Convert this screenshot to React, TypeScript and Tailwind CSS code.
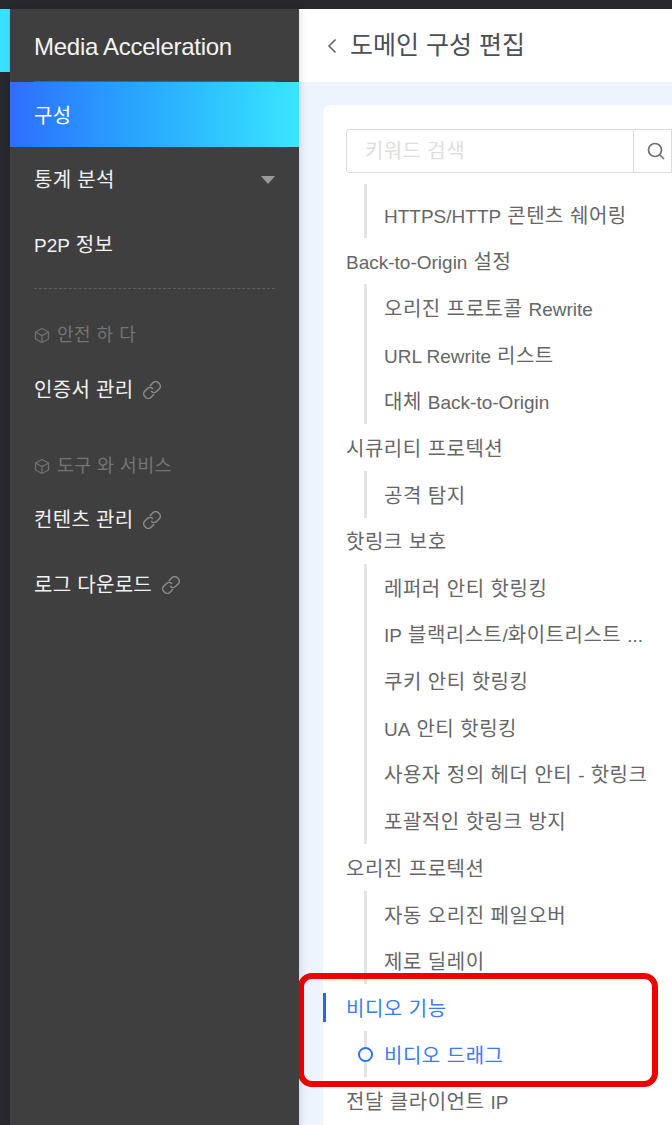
import React from 'react'

const fontStack = '[font-family:"Liberation_Sans","Noto_Sans_CJK_KR",sans-serif]'

type TreeGroup = {
  title?: string
  active?: boolean
  items: {label: string; active?: boolean}[]
}

const groups: TreeGroup[] = [
  {items: [{label: 'HTTPS/HTTP 콘텐츠 쉐어링'}]},
  {
    title: 'Back-to-Origin 설정',
    items: [{label: '오리진 프로토콜 Rewrite'}, {label: 'URL Rewrite 리스트'}, {label: '대체 Back-to-Origin'}],
  },
  {title: '시큐리티 프로텍션', items: [{label: '공격 탐지'}]},
  {
    title: '핫링크 보호',
    items: [
      {label: '레퍼러 안티 핫링킹'},
      {label: 'IP 블랙리스트/화이트리스트 ...'},
      {label: '쿠키 안티 핫링킹'},
      {label: 'UA 안티 핫링킹'},
      {label: '사용자 정의 헤더 안티 - 핫링크'},
      {label: '포괄적인 핫링크 방지'},
    ],
  },
  {title: '오리진 프로텍션', items: [{label: '자동 오리진 페일오버'}, {label: '제로 딜레이'}]},
  {title: '비디오 기능', active: true, items: [{label: '비디오 드래그', active: true}]},
]

// latin runs sit a bit smaller than the hangul in the original
function Mixed({text}: {text: string}) {
  return (
    <>
      {text.split(/([A-Za-z0-9/.\-]+(?: [A-Za-z0-9/.\-]+)*)/).map((part, i) =>
        i % 2 ? (
          <span key={i} className="text-[19px] tracking-normal">
            {part}
          </span>
        ) : (
          part
        ),
      )}
    </>
  )
}

function BoxIcon() {
  return (
    <svg width="16" height="17" viewBox="0 0 16 17" fill="none" stroke="#6f6f6f" strokeWidth="1.4">
      <path d="M8 1.5 14.5 5v7L8 15.5 1.5 12V5L8 1.5Z" strokeLinejoin="round" />
      <path d="M1.5 5 8 8.6 14.5 5M8 8.6v6.9" strokeLinejoin="round" />
    </svg>
  )
}

function LinkIcon() {
  return (
    <svg width="18" height="18" viewBox="1.5 1.5 15 15" fill="none" stroke="#8a8a8a" strokeWidth="1.3" strokeLinecap="round">
      <path d="M7.6 5.2 10 2.8a2.9 2.9 0 0 1 4.1 0l1 1a2.9 2.9 0 0 1 0 4.1l-2.4 2.4a2.9 2.9 0 0 1-4.1 0" />
      <path d="M10.4 12.8 8 15.2a2.9 2.9 0 0 1-4.1 0l-1-1a2.9 2.9 0 0 1 0-4.1l2.4-2.4a2.9 2.9 0 0 1 4.1 0" />
    </svg>
  )
}

function Sidebar() {
  return (
    <aside className="relative z-10 flex w-[289px] shrink-0 flex-col bg-[#3f3f3f] text-[#f2f2f2] tracking-[0.3px] shadow-[2px_0_6px_rgba(0,0,0,0.12)]">
      <div className="mx-[24px] flex h-[73px] items-center border-b border-[#5d5d5d] pt-[3px] text-[24px] tracking-[-0.27px] text-[#f5f5f5]">
        Media Acceleration
      </div>
      <div className="flex h-[65px] items-center bg-gradient-to-r from-[#2f6dff] to-[#3ae6ff] pl-[24px] pt-[2px] text-[20px] text-white">
        구성
      </div>
      <div className="flex h-[65px] items-center justify-between pl-[24px] pr-[24px] text-[20px]">
        <span>통계 분석</span>
        <span className="h-0 w-0 border-x-[7px] border-t-[8px] border-x-transparent border-t-[#9a9a9a]" />
      </div>
      <div className="flex h-[65px] items-center pl-[24px] pt-[2px] text-[20px]">
        <span>
          <Mixed text="P2P 정보" />
        </span>
      </div>
      <div className="mx-[24px] mt-[11px] border-t border-dashed border-[#5f5f5f]" />
      <div className="mt-[34px] flex items-center gap-[7px] pl-[24px] text-[18px] leading-[24px] text-[#747474]">
        <BoxIcon />
        <span className="tracking-[0.5px]">안전 하 다</span>
      </div>
      <div className="mt-[31px] flex items-center gap-[10px] pl-[24px] text-[20px] leading-[24px]">
        <span>인증서 관리</span>
        <LinkIcon />
      </div>
      <div className="mt-[52px] flex items-center gap-[7px] pl-[24px] text-[18.5px] leading-[24px] text-[#747474]">
        <BoxIcon />
        <span>도구 와 서비스</span>
      </div>
      <div className="mt-[30px] flex items-center gap-[10px] pl-[24px] text-[20px] leading-[24px]">
        <span>컨텐츠 관리</span>
        <LinkIcon />
      </div>
      <div className="mt-[41px] flex items-center gap-[10px] pl-[24px] text-[20px] leading-[24px]">
        <span>로그 다운로드</span>
        <LinkIcon />
      </div>
    </aside>
  )
}

function Tree() {
  return (
    <div className="mt-[11px] tracking-[0.5px]">
      {groups.map((group, i) => (
        <div key={i}>
          {group.title && (
            <div
              className={`relative flex h-[46.67px] items-center pl-[23px] pt-[3px] text-[20px] whitespace-nowrap ${
                group.active ? 'text-[#3b7bf6]' : 'text-[#666666]'
              }`}
            >
              {group.active && <span className="absolute left-0 top-[9px] h-[29px] w-[3px] bg-[#2468f2]" />}
              <span>
                <Mixed text={group.title} />
              </span>
            </div>
          )}
          <div className={`ml-[41px] border-l-[3px] border-[#e3e3e3] ${i === 0 ? 'pt-[7px]' : ''}`}>
            {group.items.map(item => (
              <div
                key={item.label}
                className={`relative flex h-[46.67px] items-center pl-[17px] pt-[3px] text-[20px] whitespace-nowrap ${
                  item.active ? 'text-[#3b7bf6]' : 'text-[#666666]'
                }`}
              >
                {item.active && (
                  <span className="absolute left-[-9px] top-[16px] h-[15px] w-[15px] rounded-full border-[2px] border-[#2f72f0] bg-white" />
                )}
                <span>
                  <Mixed text={item.label} />
                </span>
              </div>
            ))}
          </div>
        </div>
      ))}
      <div className="flex h-[46.67px] items-center pl-[23px] pt-[3px] text-[20px] whitespace-nowrap text-[#666666]">
        <span>
          <Mixed text="전달 클라이언트 IP" />
        </span>
      </div>
    </div>
  )
}

export default function App() {
  return (
    <div className={`relative h-[1125px] w-[672px] overflow-hidden bg-[#26282d] ${fontStack}`}>
      <div className="h-[9px] bg-[#26282d]" />
      <div className="flex h-[1116px]">
        <div className="w-[10px] shrink-0">
          <div className="h-[63px] bg-[#38e0ff]" />
        </div>
        <Sidebar />
        <main className="min-w-0 flex-1 bg-[#edf4fd]">
          <header className="flex h-[73px] items-center gap-[13px] bg-white pl-[28px] text-[#4a4f58]">
            <svg width="10" height="16" viewBox="0 0 10 16" fill="none" stroke="#5f6670" strokeWidth="1.6">
              <path d="M8.5 1.5 2 8l6.5 6.5" />
            </svg>
            <span className="text-[25px]">도메인 구성 편집</span>
          </header>
          <section className="ml-[24px] mt-[23px] h-[1100px] rounded-tl-[8px] bg-white pt-[24px]">
            <div className="ml-[23px] flex h-[44px] rounded-l-[3px] border border-[#dcdcdc]">
              <div className="flex w-[286px] items-center pl-[18px] text-[20px] tracking-[0.4px] text-[#dedede]">키워드 검색</div>
              <div className="flex flex-1 items-center border-l border-[#dcdcdc] pl-[12px]">
                <svg width="20" height="20" viewBox="0 0 20 20" fill="none" stroke="#6b7078" strokeWidth="1.7">
                  <circle cx="9" cy="9" r="6.5" />
                  <path d="m14 14 4 4" />
                </svg>
              </div>
            </div>
            <Tree />
          </section>
        </main>
      </div>
      <div className="absolute left-[298px] top-[973px] h-[114px] w-[360px] rounded-[14px] border-[6px] border-[#f00000]" />
    </div>
  )
}
